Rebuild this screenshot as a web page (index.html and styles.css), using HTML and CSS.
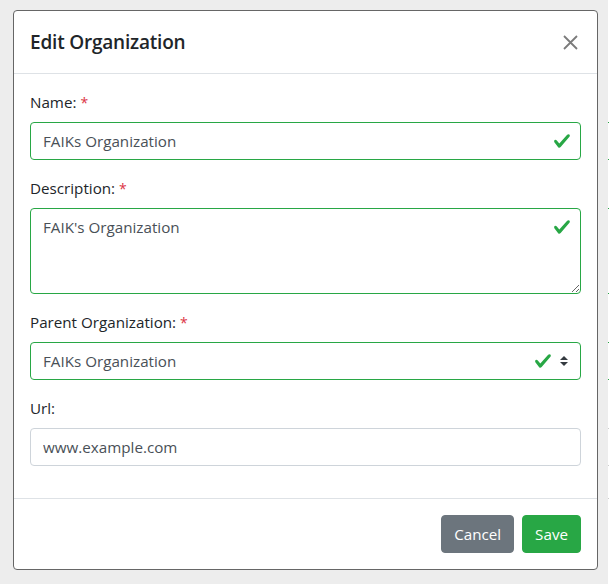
FILE: index.html
```html
<!DOCTYPE html>
<html lang="en">
<head>
<meta charset="utf-8">
<title>Edit Organization</title>
<link rel="stylesheet" href="styles.css">
</head>
<body>
<div class="page">
  <div class="stage">
    <div class="modal">
      <div class="modal-header">
        <h5 class="modal-title">Edit Organization</h5>
        <button class="close" type="button" aria-label="Close">
          <svg width="15" height="15" viewBox="0 0 15 15"><path d="M1 1L14 14M14 1L1 14" stroke="#7b7b7b" stroke-width="1.8" fill="none"/></svg>
        </button>
      </div>
      <div class="modal-body">
        <div class="form-group">
          <label class="label">Name: <span class="req">*</span></label>
          <div class="field">
            <input class="form-control is-valid" type="text" value="FAIKs Organization">
            <svg class="check check-mid" width="18" height="18" viewBox="0 0 8 8"><path fill="#28a745" d="M2.3 6.73L.6 4.53c-.4-1.04.46-1.4 1.1-.8l1.1 1.4 3.4-3.8c.6-.63 1.6-.27 1.2.7l-4 4.6c-.43.5-.8.4-1.1.1z"/></svg>
          </div>
        </div>
        <div class="form-group">
          <label class="label">Description: <span class="req">*</span></label>
          <div class="field">
            <textarea class="form-control is-valid textarea" rows="3">FAIK's Organization</textarea>
            <svg class="check check-top" width="18" height="18" viewBox="0 0 8 8"><path fill="#28a745" d="M2.3 6.73L.6 4.53c-.4-1.04.46-1.4 1.1-.8l1.1 1.4 3.4-3.8c.6-.63 1.6-.27 1.2.7l-4 4.6c-.43.5-.8.4-1.1.1z"/></svg>
          </div>
        </div>
        <div class="form-group">
          <label class="label">Parent Organization: <span class="req">*</span></label>
          <div class="field">
            <select class="form-control is-valid select"><option>FAIKs Organization</option></select>
            <svg class="check check-select" width="18" height="18" viewBox="0 0 8 8"><path fill="#28a745" d="M2.3 6.73L.6 4.53c-.4-1.04.46-1.4 1.1-.8l1.1 1.4 3.4-3.8c.6-.63 1.6-.27 1.2.7l-4 4.6c-.43.5-.8.4-1.1.1z"/></svg>
            <svg class="arrows" width="8" height="10" viewBox="0 0 4 5"><path fill="#343a40" d="M2 0L0 2h4zm0 5L0 3h4z"/></svg>
          </div>
        </div>
        <div class="form-group">
          <label class="label">Url:</label>
          <div class="field">
            <input class="form-control" type="text" value="www.example.com">
          </div>
        </div>
      </div>
      <div class="modal-footer">
        <button class="btn btn-secondary" type="button">Cancel</button>
        <button class="btn btn-success" type="button">Save</button>
      </div>
    </div>
  </div>
  <div class="edge"></div>
</div>
</body>
</html>
```
FILE: styles.css
```css
* { box-sizing: border-box; }
html, body { margin: 0; padding: 0; }
body {
  font-family: "Open Sans", "Noto Sans", "Liberation Sans", sans-serif;
  font-size: 15.2px;
  line-height: 24px;
  color: #212529;
  background: #fff;
}
.page {
  display: flex;
  width: 610px;
  height: 584px;
}
.stage {
  width: 608px;
  background: #ededed;
  padding: 10px 0 0 13px;
}
.edge {
  flex: 1;
  background:
    linear-gradient(#28a745, #28a745) 0 122px / 1px 1px no-repeat,
    linear-gradient(#28a745, #28a745) 0 159px / 1px 1px no-repeat,
    linear-gradient(#28a745, #28a745) 0 208px / 1px 1px no-repeat,
    linear-gradient(#28a745, #28a745) 0 293px / 1px 1px no-repeat,
    linear-gradient(#28a745, #28a745) 0 342px / 1px 1px no-repeat,
    linear-gradient(#28a745, #28a745) 0 379px / 1px 1px no-repeat,
    linear-gradient(#ccc, #ccc) 0 428px / 1px 1px no-repeat,
    linear-gradient(#ccc, #ccc) 0 465px / 1px 1px no-repeat,
    linear-gradient(#ccc, #ccc) 0 498px / 1px 1px no-repeat,
    #fff;
}
.modal {
  width: 585px;
  background: #fff;
  border: 1px solid #666;
  border-radius: 4px;
  display: flex;
  flex-direction: column;
}
.modal-header {
  display: flex;
  align-items: flex-start;
  justify-content: space-between;
  padding: 16px;
  border-bottom: 1px solid #dee2e6;
}
.modal-title {
  margin: 0;
  font-size: 19px;
  line-height: 30px;
  font-weight: 600;
  letter-spacing: -0.2px;
  color: #212529;
}
.close {
  border: 0;
  background: transparent;
  padding: 0;
  margin: 7px 3px 0 0;
  width: 16px;
  height: 16px;
  display: flex;
  align-items: center;
  justify-content: center;
}
.modal-body {
  padding: 16px;
}
.form-group {
  margin-bottom: 16px;
}
.label {
  display: block;
  height: 24px;
  margin-bottom: 8px;
  line-height: 24px;
}
.req { color: #dc3545; font-size: 14px; line-height: 1; }
.field { position: relative; }
.form-control {
  display: block;
  width: 100%;
  height: 38px;
  padding: 6px 12px;
  font-family: inherit;
  font-size: 15.2px;
  line-height: 24px;
  color: #495057;
  background: #fff;
  border: 1px solid #ced4da;
  border-radius: 4px;
  outline: none;
  margin: 0;
}
.form-control.is-valid {
  border-color: #28a745;
  padding-right: 36px;
}
.textarea {
  height: 86px;
  resize: vertical;
}
.select {
  appearance: none;
  -webkit-appearance: none;
}
.select.is-valid { padding-right: 64px; }
.check { position: absolute; }
.check-mid { right: 10px; top: 10px; }
.check-top { right: 10px; top: 10px; }
.check-select { right: 29px; top: 10px; }
.arrows { position: absolute; right: 13px; top: 14px; }
.modal-footer {
  display: flex;
  justify-content: flex-end;
  align-items: center;
  padding: 12px;
  border-top: 1px solid #dee2e6;
}
.btn {
  margin: 4px;
  height: 38px;
  padding: 6px 12px;
  font-family: inherit;
  font-size: 15.2px;
  line-height: 24px;
  color: #fff;
  border: 1px solid transparent;
  border-radius: 4px;
}
.btn-secondary { background: #6c757d; border-color: #6c757d; }
.btn-success { background: #28a745; border-color: #28a745; }
```
